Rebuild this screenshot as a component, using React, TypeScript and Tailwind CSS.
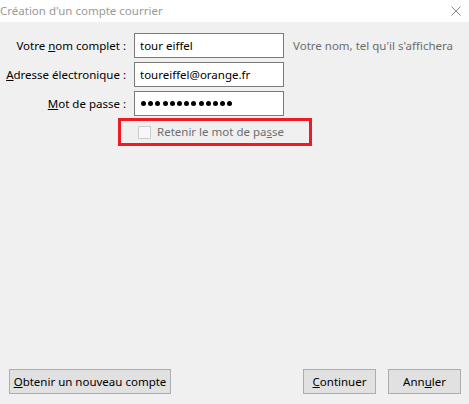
import React from 'react';

const font = { fontFamily: '"Noto Sans", "Open Sans", sans-serif' };

function Field({ children }: { children: React.ReactNode }) {
  return (
    <div className="h-[25px] w-[150px] border border-[#7a7a7a] bg-white flex items-center px-[5px] text-[11.5px] text-black">
      {children}
    </div>
  );
}

function Btn({ children, className = '' }: { children: React.ReactNode; className?: string }) {
  return (
    <button className={`h-[25px] border border-[#adadad] bg-[#e1e1e1] text-[11.5px] text-black flex items-center justify-center ${className}`}>
      {children}
    </button>
  );
}

export default function App() {
  const dots = Array.from({ length: 13 });
  return (
    <div className="w-[469px] h-[404px] bg-[#f0f0f0] flex flex-col overflow-hidden" style={font}>
      {/* title bar */}
      <div className="h-[22px] bg-white flex items-center justify-between pl-0 pr-[4px]">
        <span className="text-[11.5px] text-[#999999] -mt-[1px]">Création d'un compte courrier</span>
        <svg width="10" height="10" viewBox="0 0 10 10" className="mr-[4px]">
          <path d="M0.5 0.5 L9.5 9.5 M9.5 0.5 L0.5 9.5" stroke="#8a8a8a" strokeWidth="1" />
        </svg>
      </div>

      {/* form */}
      <div className="grid grid-cols-[126px_150px_auto] gap-x-[8px] gap-y-[4px] mt-[11px] items-center">
        <label className="text-right text-[11.5px] text-black">
          Votre <u>n</u>om complet :
        </label>
        <Field>tour eiffel</Field>
        <span className="text-[11.5px] text-[#6d6d6d] pl-[1px]">Votre nom, tel qu'il s'affichera</span>

        <label className="text-right text-[11.5px] text-black">
          <u>A</u>dresse électronique :
        </label>
        <Field>toureiffel@orange.fr</Field>
        <span />

        <label className="text-right text-[11.5px] text-black">
          <u>M</u>ot de passe :
        </label>
        <Field>
          <div className="flex gap-[2.2px] pl-[1px]">
            {dots.map((_, i) => (
              <span key={i} className="block w-[5px] h-[5px] rounded-full bg-black" />
            ))}
          </div>
        </Field>
        <span />
      </div>

      <div className="ml-[118px] mt-[2px] w-[194px] h-[28px] border-[3px] border-[#ed1c24] flex items-center">
        <span className="block w-[13px] h-[13px] border border-[#cccccc] bg-[#f7f7f7] ml-[17px]" />
        <span className="text-[11.5px] text-[#6d6d6d] ml-[6px]">
          Retenir le mot de pa<u>s</u>se
        </span>
      </div>

      <div className="flex-1" />

      {/* footer */}
      <div className="flex items-center px-[9px] pb-[10px]">
        <Btn className="w-[162px]">
          <span><u>O</u>btenir un nouveau compte</span>
        </Btn>
        <div className="flex-1" />
        <Btn className="w-[73px]">
          <span><u>C</u>ontinuer</span>
        </Btn>
        <Btn className="w-[73px] ml-[12px] mr-[-1px]">
          <span>Ann<u>u</u>ler</span>
        </Btn>
      </div>
    </div>
  );
}
